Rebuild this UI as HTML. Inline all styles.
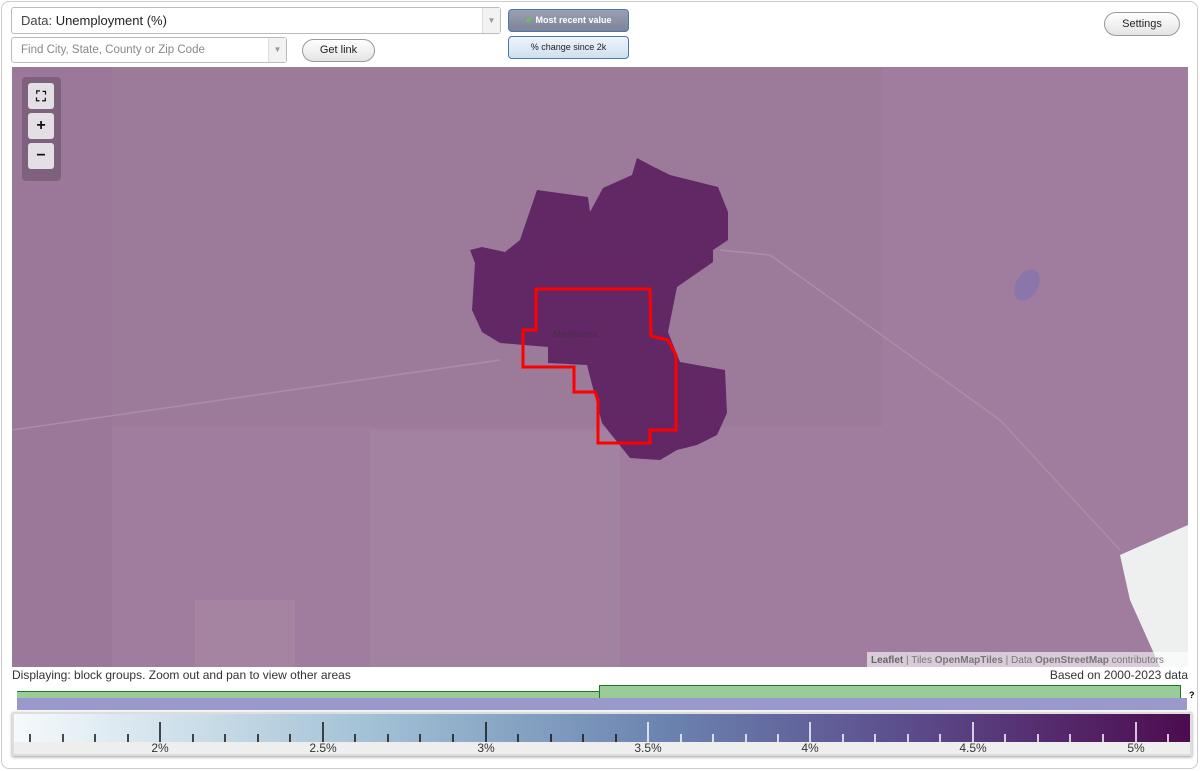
<!DOCTYPE html>
<html><head><meta charset="utf-8"><style>
*{margin:0;padding:0;box-sizing:border-box}
body{width:1200px;height:771px;background:#fff;font-family:"Liberation Sans",sans-serif;position:relative;overflow:hidden}
.frame{position:absolute;left:1px;top:1px;width:1197px;height:768px;border:1px solid #ccc;border-radius:8px}
.sel{position:absolute;border:1px solid #bbb;border-radius:3px;background:#fff;color:#444;font-size:14px}
.arr{position:absolute;right:0;top:0;bottom:0;width:18px;border-left:1px solid #ddd;background:#f2f2f2;color:#999;font-size:8px;text-align:center}
.pill{position:absolute;border:1px solid #999;border-radius:12px;background:linear-gradient(#fff,#e4e4e4);font-size:11px;color:#222;text-align:center}
.tb{position:absolute;border:1px solid #4a78a8;border-radius:4px;font-size:9px;text-align:center}
.zb{position:absolute;left:28px;width:26px;height:26px;background:#e4dfe4;border-radius:3px;text-align:center;font-weight:bold;font-size:16px;line-height:26px;color:#111}
</style></head><body>
<div class="frame"></div>
<div class="sel" style="left:11px;top:7px;width:490px;height:27px;line-height:25px;padding-left:9px;font-size:13px">Data: <span style="color:#222">Unemployment (%)</span><div class="arr" style="line-height:25px">▼</div></div>
<div class="sel" style="left:11px;top:37px;width:276px;height:26px;line-height:24px;padding-left:9px;font-size:11.5px;color:#888">Find City, State, County or Zip Code<div class="arr" style="line-height:24px">▼</div></div>
<div class="pill" style="left:302px;top:39px;width:73px;height:23px;line-height:21px">Get link</div>
<div class="tb" style="left:508px;top:9px;width:121px;height:23px;line-height:21px;background:linear-gradient(#9aa0b4,#7d8398);color:#fff;font-weight:bold"><span style="color:#6c3">✔</span> Most recent value</div>
<div class="tb" style="left:508px;top:36px;width:121px;height:23px;line-height:21px;background:linear-gradient(#eef4fb,#cfe0f0);color:#222">% change since 2k</div>
<div class="pill" style="left:1104px;top:12px;width:76px;height:24px;line-height:22px">Settings</div>

<svg style="position:absolute;left:12px;top:67px" width="1176" height="600" viewBox="12 67 1176 600">
<rect x="12" y="67" width="1176" height="600" fill="#a07d9e"/>
<rect x="12" y="67" width="100" height="600" fill="#9b7899"/>
<rect x="112" y="67" width="770" height="360" fill="#9c7a9a"/>
<rect x="370" y="430" width="250" height="237" fill="#a38aa2" opacity=".4"/>
<rect x="195" y="600" width="100" height="67" fill="#a688a4" opacity=".6"/>
<path d="M1120 555 L1188 525 L1188 667 L1160 667 L1130 600 Z" fill="#eef0f0"/>
<path d="M12 430 L500 360 M720 250 L770 255 L1000 420 L1120 550" stroke="#a98ea8" stroke-width="1.5" fill="none"/>
<ellipse cx="1027" cy="285" rx="11" ry="17" fill="#8a76aa" transform="rotate(30 1027 285)"/>
<path d="M470 250 L482 247 L505 252 L520 240 L537 190 L588 197 L590 212 L603 188 L632 175 L637 158 L650 165 L670 175 L718 187 L728 212 L728 240 L713 250 L713 262 L677 287 L668 332 L680 362 L725 370 L727 413 L717 435 L697 445 L677 450 L660 460 L630 458 L602 423 L587 365 L548 363 L548 347 L500 343 L482 332 L472 310 L475 263 Z" fill="#612865"/>
<text x="553" y="337" font-size="9" fill="#4a2a4c" font-family="Liberation Sans">Magdalena</text>
<path d="M536 289 L650 289 L651 336 L668 340 L676 355 L676 430 L650 430 L650 443 L598 443 L598 400 L595 392 L574 392 L574 367 L523 367 L523 330 L536 330 Z" fill="none" stroke="#f00" stroke-width="3"/>
<rect x="867" y="652" width="321" height="15" fill="#fff" opacity=".6"/>
<text x="871" y="663" font-size="10" fill="#777" font-family="Liberation Sans"><tspan font-weight="bold" fill="#666">Leaflet</tspan> | Tiles <tspan font-weight="bold">OpenMapTiles</tspan> | Data <tspan font-weight="bold">OpenStreetMap</tspan> contributors</text>
</svg>
<div style="position:absolute;left:22px;top:77px;width:39px;height:104px;background:rgba(90,70,90,.45);border-radius:4px"></div>
<div class="zb" style="top:83px;font-size:14px">⛶</div>
<div class="zb" style="top:113px">+</div>
<div class="zb" style="top:143px">−</div>

<div style="position:absolute;left:12px;top:668px;font-size:12px;color:#333">Displaying: block groups. Zoom out and pan to view other areas</div>
<div style="position:absolute;right:12px;top:668px;font-size:12px;color:#333">Based on 2000-2023 data</div>
<div style="position:absolute;left:17px;top:691px;width:582px;height:7px;background:#9c9;border-top:1px solid #272"></div>
<div style="position:absolute;left:599px;top:685px;width:582px;height:13px;background:#9c9;border-top:1px solid #272;border-left:1px solid #272;border-right:1px solid #272"></div>
<div style="position:absolute;left:1189px;top:690px;font-size:9px;font-weight:bold">?</div>
<div style="position:absolute;left:17px;top:698px;width:1170px;height:12px;background:#9999cc"></div>
<div style="position:absolute;left:12px;top:712px;width:1180px;height:44px;border:2px solid #ddd;box-shadow:0 1px 3px #999;background:#eee"></div>
<svg style="position:absolute;left:14px;top:714px" width="1176" height="40">
<defs><linearGradient id="g" x1="0" x2="1"><stop offset="0" stop-color="#f5fafc"/><stop offset=".3" stop-color="#a3c2d6"/><stop offset=".55" stop-color="#6b84b0"/><stop offset=".75" stop-color="#5c4f8e"/><stop offset="1" stop-color="#4d0b4f"/></linearGradient></defs>
<rect width="1176" height="28" fill="url(#g)"/>
<g font-size="12" fill="#333" font-family="Liberation Sans" text-anchor="middle">
<text x="146" y="38">2%</text><text x="309" y="38">2.5%</text><text x="472" y="38">3%</text><text x="634" y="38">3.5%</text><text x="796" y="38">4%</text><text x="959" y="38">4.5%</text><text x="1122" y="38">5%</text></g>
<g stroke-width="1.5">
<path stroke="#111" d="M16 20V28M49 20V28M81 20V28M114 20V28M146 8V28M179 20V28M211 20V28M244 20V28M276 20V28M309 8V28M341 20V28M374 20V28M406 20V28M439 20V28M472 8V28M504 20V28M537 20V28M569 20V28M602 20V28"/>
<path stroke="#fff" d="M634 8V28M667 20V28M699 20V28M732 20V28M764 20V28M796 8V28M829 20V28M861 20V28M894 20V28M926 20V28M959 8V28M991 20V28M1024 20V28M1056 20V28M1089 20V28M1122 8V28M1154 20V28"/>
</g></svg>
</body></html>
